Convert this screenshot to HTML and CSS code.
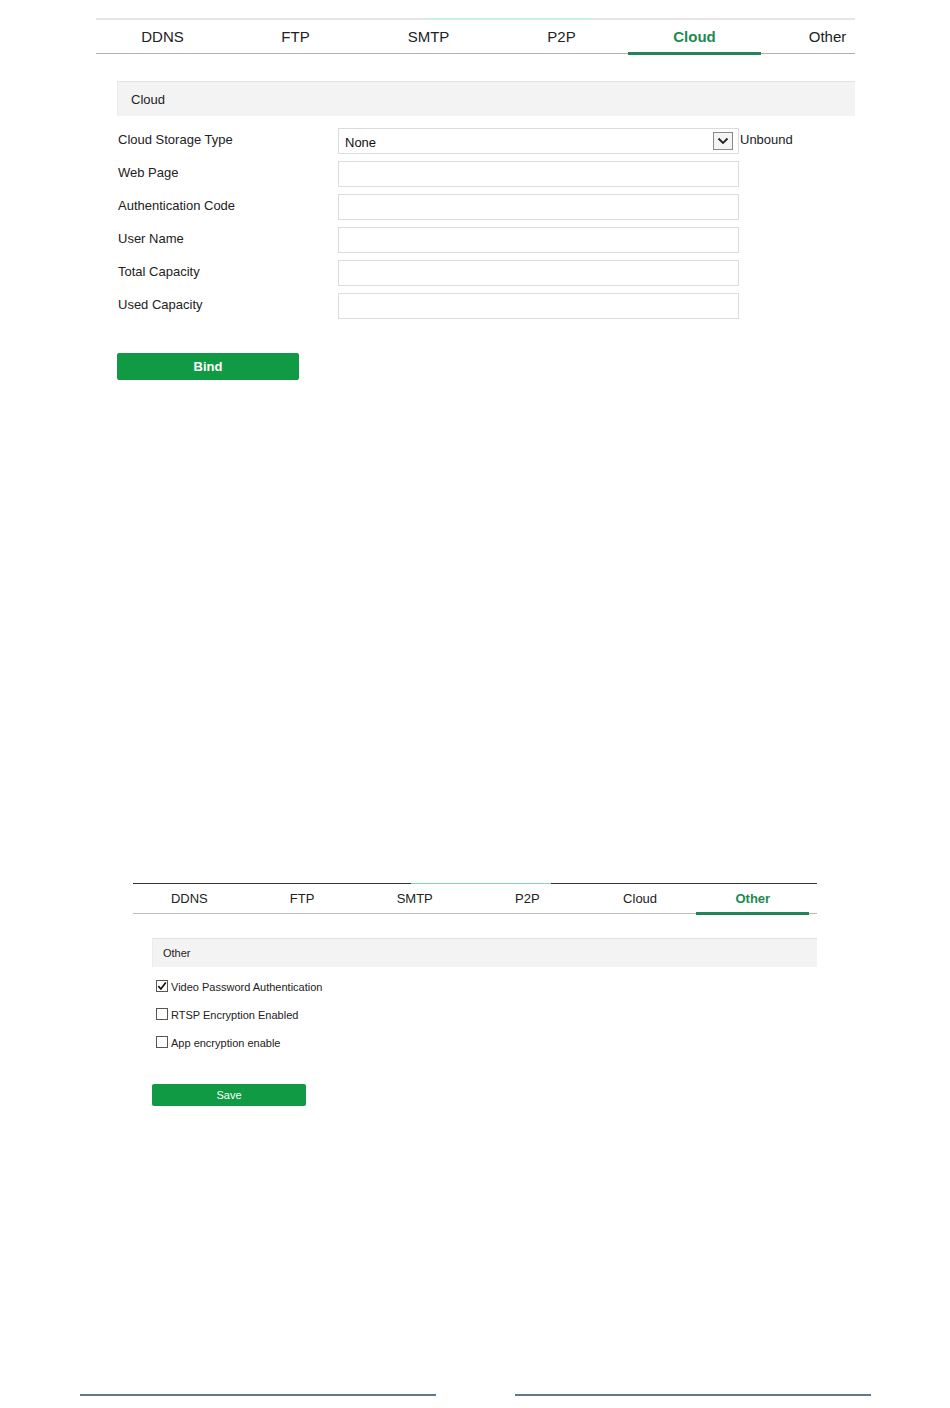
FILE: index.html
```html
<!DOCTYPE html>
<html lang="en">
<head>
<meta charset="utf-8">
<title>Network Settings</title>
<link rel="stylesheet" href="styles.css">
</head>
<body>
<div class="page">
  <section class="panel panel-lg">
    <nav class="tabs tabs-lg">
      <div class="tab">DDNS</div>
      <div class="tab">FTP</div>
      <div class="tab">SMTP</div>
      <div class="tab">P2P</div>
      <div class="tab active">Cloud</div>
      <div class="tab">Other</div>
    </nav>
    <div class="section-head head-lg">Cloud</div>
    <div class="form">
      <div class="row">
        <span class="label">Cloud Storage Type</span>
        <div class="field select">
          <span class="value">None</span>
          <span class="arrow"><svg width="12" height="8" viewBox="0 0 12 8"><path d="M1.5 1.5 L6 6 L10.5 1.5" fill="none" stroke="#222" stroke-width="1.8"/></svg></span>
        </div>
        <span class="status">Unbound</span>
      </div>
      <div class="row"><span class="label">Web Page</span><div class="field"></div></div>
      <div class="row"><span class="label">Authentication Code</span><div class="field"></div></div>
      <div class="row"><span class="label">User Name</span><div class="field"></div></div>
      <div class="row"><span class="label">Total Capacity</span><div class="field"></div></div>
      <div class="row"><span class="label">Used Capacity</span><div class="field"></div></div>
    </div>
    <button class="btn btn-lg">Bind</button>
  </section>

  <section class="panel panel-sm">
    <nav class="tabs tabs-sm">
      <div class="tab">DDNS</div>
      <div class="tab">FTP</div>
      <div class="tab">SMTP</div>
      <div class="tab">P2P</div>
      <div class="tab">Cloud</div>
      <div class="tab active">Other</div>
    </nav>
    <div class="section-head head-sm">Other</div>
    <div class="checks">
      <div class="check"><span class="box"><svg width="10" height="10" viewBox="0 0 10 10"><path d="M1.3 5.2 L3.9 8 L8.8 1.6" fill="none" stroke="#111" stroke-width="1.7"/></svg></span>Video Password Authentication</div>
      <div class="check"><span class="box"></span>RTSP Encryption Enabled</div>
      <div class="check"><span class="box"></span>App encryption enable</div>
    </div>
    <button class="btn btn-sm">Save</button>
  </section>

  <footer class="footer">
    <span class="fline fline-left"></span>
    <span class="fline fline-right"></span>
  </footer>
</div>
</body>
</html>
```

FILE: styles.css
```css
* { box-sizing: border-box; }

html, body {
  margin: 0;
  padding: 0;
  background: #ffffff;
}

body {
  font-family: "Liberation Sans", Arial, sans-serif;
  color: #222;
}

.page {
  width: 950px;
  height: 1408px;
  display: flex;
  flex-direction: column;
}

/* ---------- Tabs ---------- */
.tabs {
  display: flex;
  position: relative;
}

.tab {
  flex: 0 0 auto;
  text-align: center;
  position: relative;
  color: #222;
}

.tab.active {
  color: #1d8a4f;
  font-weight: bold;
}

.tab.active::after {
  content: "";
  position: absolute;
  left: 0;
  right: 0;
  bottom: -2px;
  height: 3px;
  background: #23845a;
}

.tabs::before {
  content: "";
  position: absolute;
  top: -1px;
  height: 2px;
}

/* large panel */
.panel-lg {
  margin-left: 96px;
  width: 759px;
  padding-top: 18px;
}

.tabs-lg {
  height: 36px;
  border-top: 2px solid #e6e6e6;
  border-bottom: 1px solid #b0b0b0;
  font-size: 15px;
}

.tabs-lg::before {
  top: -2px;
  left: 330px;
  width: 164px;
  background: #c6f2de;
}

.tabs-lg .tab {
  width: 133px;
  line-height: 33px;
}

.head-lg {
  margin-top: 27px;
  margin-left: 21px;
  height: 35px;
  line-height: 35px;
  padding-left: 13px;
  font-size: 13px;
}

.section-head {
  background: #f3f3f3;
  border-top: 1px solid #e2e2e2;
  border-left: 1px solid #ececec;
  color: #222;
}

.form {
  margin-top: 12px;
  margin-left: 22px;
  display: flex;
  flex-direction: column;
  gap: 7px;
}

.row {
  display: flex;
  align-items: center;
  height: 26px;
}

.label {
  width: 220px;
  font-size: 13px;
  margin-top: -4px;
  color: #222;
}

.field {
  width: 401px;
  height: 26px;
  border: 1px solid #dcdcdc;
  background: #fff;
}

.select {
  display: flex;
  align-items: center;
  justify-content: space-between;
  padding: 0 5px 0 6px;
}

.value {
  font-size: 13px;
  color: #111;
  margin-top: 2px;
}

.arrow {
  width: 20px;
  height: 18px;
  border: 1px solid #8a8a8a;
  background: #f4f4f4;
  display: flex;
  align-items: center;
  justify-content: center;
}

.status {
  margin-left: 1px;
  margin-top: -3px;
  font-size: 13px;
  color: #222;
}

.btn {
  display: block;
  border: none;
  border-radius: 2px;
  background: #0f9a43;
  color: #fff;
  font-family: "Liberation Sans", Arial, sans-serif;
  padding: 0;
  text-align: center;
}

.btn-lg {
  margin-top: 34px;
  margin-left: 21px;
  width: 182px;
  height: 27px;
  font-size: 13px;
  font-weight: bold;
}

/* small panel */
.panel-sm {
  margin-top: 503px;
  margin-left: 133px;
  width: 684px;
}

.tabs-sm {
  height: 31px;
  border-top: 1px solid #333;
  border-bottom: 1px solid #bcbcbc;
  font-size: 13px;
}

.tabs-sm::before {
  top: -1px;
  left: 278px;
  width: 140px;
  height: 1px;
  background: #7fd9ab;
}

.tabs-sm .tab {
  width: 112.7px;
  line-height: 30px;
}

.tabs-sm .tab.active::after {
  bottom: -2px;
  height: 3px;
}

.head-sm {
  margin-top: 24px;
  margin-left: 19px;
  height: 29px;
  line-height: 29px;
  padding-left: 10px;
  font-size: 11px;
}

.checks {
  margin-top: 6px;
  margin-left: 23px;
  display: flex;
  flex-direction: column;
}

.check {
  display: flex;
  align-items: center;
  height: 28px;
  font-size: 11px;
  color: #222;
}

.box {
  width: 12px;
  height: 12px;
  border: 1px solid #555;
  background: #fff;
  margin-right: 3px;
  margin-top: -2px;
  display: flex;
  align-items: center;
  justify-content: center;
}

.btn-sm {
  margin-top: 27px;
  margin-left: 19px;
  width: 154px;
  height: 22px;
  font-size: 11px;
}

/* footer */
.footer {
  margin-top: 288px;
  display: flex;
  padding-left: 80px;
  gap: 79px;
}

.fline {
  display: block;
  width: 356px;
  height: 2px;
  background: #62778c;
  box-shadow: 0 0 1px #d6e6f4;
}
```
